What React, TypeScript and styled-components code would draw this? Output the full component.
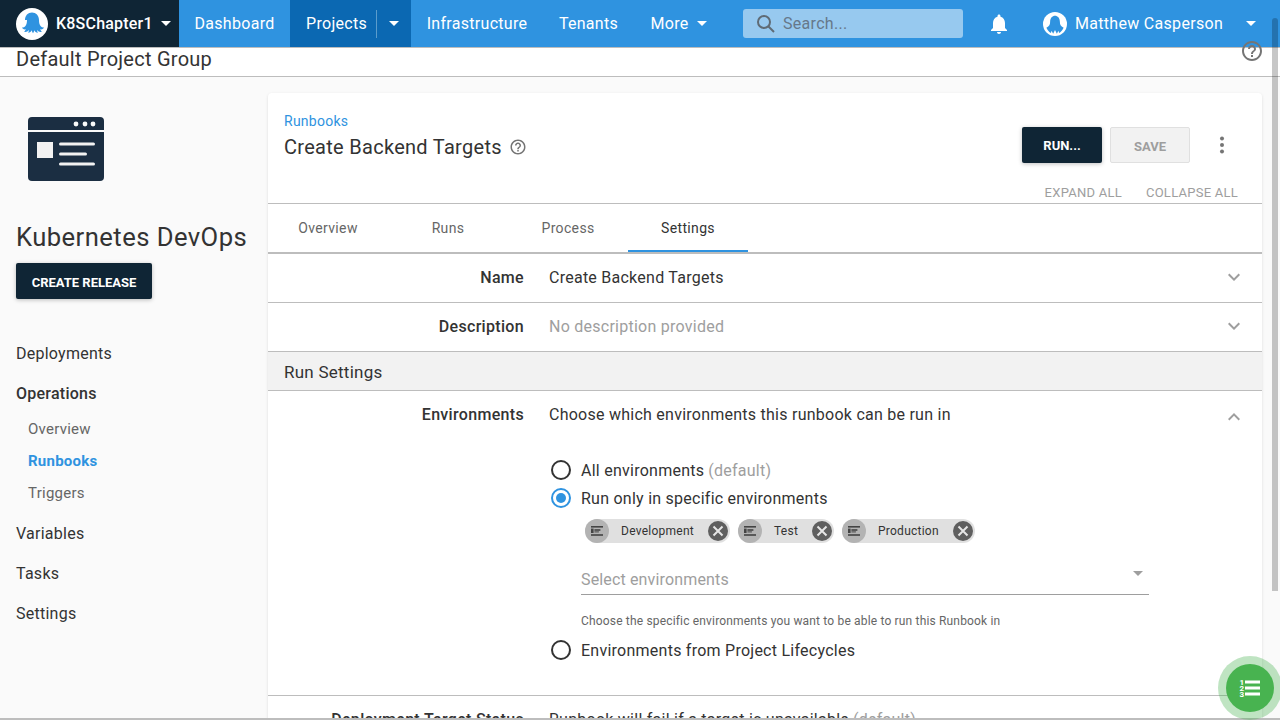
import React from "react";
import styled, { createGlobalStyle } from "styled-components";

const Global = createGlobalStyle`
  html, body { margin: 0; padding: 0; height: 100%; overflow: hidden; background: #fff; }
  body { font-family: Roboto, "Liberation Sans", sans-serif; color: #333; letter-spacing: 0.25px; }
  * { box-sizing: border-box; }
`;

const Page = styled.div`
  position: relative; width: 1280px; height: 720px; overflow: hidden;
  display: flex; flex-direction: column; background: #fafafa;
`;
const Nav = styled.nav`
  flex: none; height: 48px; display: flex; align-items: stretch;
  background: #2f93e0; border-bottom: 1px solid #bdbdbd; color: #fff; font-size: 16px; letter-spacing: 0.3px;
`;
const Org = styled.div`
  width: 179px; background: #0f2535; display: flex; align-items: center;
  padding-left: 16px; font-weight: 500; gap: 8px;
`;
const OrgName = styled.span`font-size: 16px; letter-spacing: 0.2px;`;
const NavItem = styled.div<{ $w: number }>`
  width: ${p => p.$w}px; display: flex; align-items: center; justify-content: center; gap: 8px;
`;
const ProjectsItem = styled.div`
  width: 121px; display: flex; align-items: center; padding-left: 16px; gap: 12px; background: #0b68b2;
`;
const ProjectsLabel = styled.span`
  padding-right: 9px; height: 28px; line-height: 28px; border-right: 1px solid #5b9ccc;
`;
const Caret = styled.i<{ $c?: string }>`
  display: inline-block; width: 0; height: 0; border-left: 5px solid transparent; border-right: 5px solid transparent;
  border-top: 5px solid ${p => p.$c || "#fff"};
`;
const Search = styled.div`
  width: 220px; height: 29px; margin: 9px 0 0 20px; border-radius: 3px; background: #97c9ef;
  display: flex; align-items: center; padding-left: 13px; gap: 7px; color: #66788a;
`;
const NavBell = styled.div`
  margin-left: 24px; width: 24px; display: flex; align-items: center; justify-content: center;
`;
const UserBox = styled.div`
  margin-left: 32px; display: flex; align-items: center; gap: 8px; width: 180px;
`;
const UserCaret = styled.div`margin-left: 23px; display: flex; align-items: center;`;

const SubHeader = styled.header`
  flex: none; height: 29px; background: #fff; border-bottom: 1px solid #bdbdbd;
  display: flex; justify-content: space-between; padding: 0 16px 0 16px;
  font-size: 20px; line-height: 23px; color: #333;
`;
const HelpTop = styled.div`margin-top: -9px; height: 24px;`;

const Body = styled.div`flex: 1; display: flex; min-height: 0;`;
const Side = styled.aside`flex: none; width: 268px; padding: 40px 0 0 16px;`;
const ProjectLogo = styled.div`padding-left: 12px; height: 64px;`;
const ProjectName = styled.h1`
  margin: 39px 0 0; font-weight: 400; font-size: 25.6px; line-height: 34px; color: #333; white-space: nowrap; letter-spacing: 0.45px;
`;
const CreateBtn = styled.div`
  margin-top: 9px; width: 136px; height: 36px; padding-top: 2px; background: #0f2535; color: #fff; border-radius: 2px;
  font-size: 13px; font-weight: 700; letter-spacing: 0; display: flex; align-items: center; justify-content: center;
  box-shadow: 0 1px 4px rgba(0,0,0,.25);
`;
const SideMenu = styled.div`margin-top: 35px; display: flex; flex-direction: column;`;
const SideItem = styled.div<{ $strong?: boolean }>`
  height: 40px; line-height: 40px; font-size: 16px; color: #333; font-weight: ${p => (p.$strong ? 500 : 400)};
`;
const SideSub = styled.div<{ $active?: boolean }>`
  height: 32px; line-height: 32px; font-size: 15px; padding-left: 12px;
  color: ${p => (p.$active ? "#2f93e0" : "#666")}; font-weight: ${p => (p.$active ? 700 : 400)};
`;
const SubGroup = styled.div`margin: -1px 0 0; display: flex; flex-direction: column; padding-bottom: 5px;`;

const Card = styled.main`
  width: 994px; margin-top: 16px; background: #fff; border-radius: 4px 4px 0 0;
  box-shadow: 0 1px 3px rgba(0,0,0,.12); flex: none; overflow: hidden;
`;
const CardHead = styled.div`
  height: 111px; position: relative; padding: 20px 24px 0 16px; display: flex; justify-content: space-between;
  border-bottom: 1px solid #bdbdbd;
`;
const Breadcrumb = styled.div`font-size: 14px; line-height: 16px; color: #2f93e0;`;
const TitleRow = styled.div`display: flex; align-items: center; gap: 7px; margin-top: 4px;`;
const Title = styled.h2`margin: 0; font-weight: 400; font-size: 20px; line-height: 28px; color: #333; letter-spacing: 0.29px;`;
const HeadRight = styled.div`display: flex; flex-direction: column; align-items: flex-end;`;
const Actions = styled.div`display: flex; align-items: center; margin-top: 14px; margin-right: 4px;`;
const Run = styled.div`
  width: 80px; height: 36px; background: #0f2535; color: #fff; border-radius: 2px; font-size: 13px; font-weight: 700; letter-spacing: 0;
  display: flex; align-items: center; justify-content: center; box-shadow: 0 1px 4px rgba(0,0,0,.25);
`;
const Save = styled.div`
  width: 80px; height: 36px; margin-left: 8px; background: #f2f2f2; border: 1px solid #e0e0e0; border-radius: 2px; color: #9e9e9e;
  font-size: 13px; font-weight: 700; letter-spacing: 0; display: flex; align-items: center; justify-content: center; padding-top: 3px;
`;
const Kebab = styled.div`margin-left: 20px; width: 24px; display: flex; justify-content: center;`;
const ExpandRow = styled.div`
  margin-top: 22px; display: flex; gap: 24px; font-size: 13px; line-height: 16px; color: #9e9e9e;
`;
const Tabs = styled.div`display: flex; height: 50px; border-bottom: 2px solid #bdbdbd;`;
const Tab = styled.div<{ $active?: boolean }>`
  width: 120px; height: 48px; display: flex; align-items: center; justify-content: center; font-size: 14px; letter-spacing: 0.35px;
  color: ${p => (p.$active ? "#333" : "#666")}; border-bottom: 2px solid ${p => (p.$active ? "#2f93e0" : "transparent")};
  padding-top: 1px;
`;
const Row = styled.div<{ $h: number; $open?: boolean }>`
  height: ${p => p.$h}px; border-bottom: ${p => (p.$open ? "none" : "1px solid #bdbdbd")};
  display: flex; align-items: ${p => (p.$open ? "flex-start" : "center")};
  padding: ${p => (p.$open ? "14px 0 0" : "0 0 2px")};
  font-size: 16px; flex: none;
`;
const Label = styled.div`width: 256px; text-align: right; font-weight: 500; color: #333; flex: none; line-height: 19px; letter-spacing: 0.32px;`;
const Value = styled.div<{ $muted?: boolean }>`
  margin-left: 25px; flex: 1; line-height: 19px; color: ${p => (p.$muted ? "#9e9e9e" : "#333")};
`;
const Chev = styled.div`width: 24px; margin-right: 16px; display: flex; justify-content: center;`;
const SectionHead = styled.div`
  height: 39px; background: #f2f2f2; border-bottom: 1px solid #bdbdbd; padding-left: 16px;
  font-size: 17px; line-height: 40px; color: #333;
`;
const EnvBody = styled.div`padding: 10px 0 0 281px; height: 250px; border-bottom: 1px solid #bdbdbd; margin-top: -1px;`;
const Radio = styled.div`display: flex; align-items: center; height: 28px; font-size: 16px; color: #333; gap: 10px;`;
const RadioDot = styled.span<{ $on?: boolean }>`
  width: 20px; height: 20px; margin-left: 2px; border-radius: 50%; flex: none; position: relative;
  border: 2px solid ${p => (p.$on ? "#2f93e0" : "#333")};
  ${p => p.$on ? `&::after{content:"";position:absolute;left:3px;top:3px;width:10px;height:10px;border-radius:50%;background:#2f93e0;}` : ""}
`;
const Default = styled.span`color: #9e9e9e; margin-left: 4px;`;
const Chips = styled.div`display: flex; padding-left: 36px; margin-top: 7px; height: 24px; gap: 8px;`;
const Chip = styled.div<{ $w: number }>`
  width: ${p => p.$w}px; height: 24px; border-radius: 12px; background: #e0e0e0;
  display: flex; align-items: center; font-size: 12px; color: #333; position: relative;
`;
const ChipIcon = styled.span`
  width: 24px; height: 24px; border-radius: 50%; background: #b3b3b3; display: flex; align-items: center; justify-content: center; flex: none;
`;
const ChipText = styled.span`margin-left: 12px;`;
const ChipClose = styled.span`
  position: absolute; right: 2px; top: 2px; width: 20px; height: 20px; border-radius: 50%; background: #5f5f5f;
  display: flex; align-items: center; justify-content: center;
`;
const SelectWrap = styled.div`
  margin: 18px 0 0 32px; width: 568px; height: 34px; border-bottom: 1px solid #9e9e9e; display: flex;
  justify-content: space-between; align-items: center; padding-right: 6px; font-size: 16px; color: #9e9e9e; letter-spacing: 0.15px;
`;
const SelectText = styled.span`padding-top: 4px;`;
const SelectCaret = styled(Caret)`margin-bottom: 8px;`;
const Hint = styled.div`margin: 18px 0 0 32px; font-size: 12px; line-height: 16px; color: #666; letter-spacing: 0.17px;`;
const LastRadio = styled(Radio)`margin-top: 7px;`;
const Cut = styled(Row)`border: none; height: 46px; align-items: flex-start; padding: 14px 0 0;`;

const ScrollThumb = styled.div`
  position: absolute; left: 1272px; top: 18px; width: 6px; height: 573px; border-radius: 3px 3px 0 0; background: rgba(0,0,0,.22);
`;
const BottomLine = styled.div`position: absolute; left: 0; right: 0; bottom: 0; height: 2px; background: #bdbdbd;`;
const Fab = styled.div`
  position: absolute; left: 1218px; top: 656px; width: 64px; height: 64px; border-radius: 50%; background: rgba(72,179,80,.35);
  display: flex; align-items: center; justify-content: center;
`;
const FabInner = styled.div`
  width: 48px; height: 48px; border-radius: 50%; background: #48b350; display: flex; align-items: center; justify-content: center;
`;
const FabDigit = styled.text`font: 700 8px Roboto, "Liberation Sans", sans-serif; fill: #fff; letter-spacing: 0;`;

const OrgLogo = () => (
  <svg width={32} height={32} viewBox="0 0 32 32">
    <circle cx="16" cy="16" r="16" fill="#fff" />
    <path fill="#2f93e0" d="M9 12c0-4.500 3-7.500 7-7.500s7 3 7 7.500c0 3 .5 5 2 6.500 1 1 2 1.200 3 .8-.5 1.700-2 2.500-3.800 2 .3 1 .8 1.700 1.600 2.400-1.800.6-3.600-.2-4.600-1.800-.1 1.200.2 2 .7 2.800-1.600.1-3-.8-3.600-2.400-.3 1.200-.8 2.200-1.300 3-.5-.8-1-1.800-1.300-3-.6 1.600-2 2.500-3.600 2.400.5-.8.8-1.600.7-2.800-1 1.600-2.800 2.400-4.600 1.800.8-.7 1.300-1.400 1.600-2.400-1.800.5-3.300-.3-3.800-2 1 .4 2 .2 3-.8 1.500-1.500 2-3.500 2-6.500z" />
  </svg>
);

const UserLogo = () => (
  <svg width={24} height={24} viewBox="0 0 32 32">
    <circle cx="16" cy="16" r="16" fill="#fff" />
    <path fill="#2f93e0" d="M9.500 13c0-5 3-8 6.500-8s6.500 3 6.500 8c0 4 1 6 5 8-1.500 3.500-4 6-6 7l-1-3-2 4-2.500-5-2.500 5-2-4-1 3c-2-1-4.500-3.500-6-7 4-2 5-4 5-8z" />
  </svg>
);

const HelpIcon = ({ size }: { size: number }) => (
  <svg width={size} height={size} viewBox="0 0 24 24" fill="#757575">
    <path d="M11 18h2v-2h-2v2zm1-16C6.480 2 2 6.480 2 12s4.480 10 10 10 10-4.480 10-10S17.520 2 12 2zm0 18c-4.410 0-8-3.590-8-8s3.590-8 8-8 8 3.590 8 8-3.590 8-8 8zm0-14c-2.210 0-4 1.790-4 4h2c0-1.100.9-2 2-2s2 .9 2 2c0 2-3 1.750-3 5h2c0-2.250 3-2.500 3-5 0-2.210-1.790-4-4-4z" />
  </svg>
);

const ChevronSvg = ({ up }: { up?: boolean }) => (
  <svg width="24" height="24" viewBox="0 0 24 24" fill="#9e9e9e">
    <path d={up ? "M12 8l-6 6 1.410 1.410L12 10.830l4.590 4.580L18 14z" : "M16.590 8.590L12 13.170 7.410 8.590 6 10l6 6 6-6z"} />
  </svg>
);

const EnvIcon = () => (
  <svg width="12" height="10" viewBox="0 0 12 10" fill="#444">
    <rect x="0" y="0" width="12" height="1.600" />
    <rect x="0" y="2.600" width="2.600" height="4.400" />
    <rect x="3.400" y="3.200" width="6" height="1.600" />
    <rect x="3.400" y="5.400" width="4.500" height="1" />
    <rect x="0" y="8.200" width="12" height="1.600" />
  </svg>
);

const CloseX = () => (
  <svg width="12" height="12" viewBox="0 0 12 12" stroke="#e6e6e6" strokeWidth="2"><path d="M1.500 1.500l9 9M10.500 1.500l-9 9" /></svg>
);

const ProjectIcon = () => (
  <svg width="76" height="64" viewBox="0 0 76 64">
    <path fill="#1b2e42" d="M4 0h68a4 4 0 0 1 4 4v9H0V4a4 4 0 0 1 4-4z" />
    <path fill="#1b2e42" d="M0 15h76v45a4 4 0 0 1-4 4H4a4 4 0 0 1-4-4z" />
    <circle cx="48" cy="7" r="2.400" fill="#fafafa" /><circle cx="57" cy="7" r="2.400" fill="#fafafa" /><circle cx="65" cy="7" r="2.400" fill="#fafafa" />
    <rect x="9" y="25" width="16" height="16" fill="#f2f2f2" />
    <rect x="31" y="25.500" width="36" height="3" rx="1.500" fill="#f2f2f2" />
    <rect x="31" y="35.500" width="28" height="3" rx="1.500" fill="#f2f2f2" />
    <rect x="31" y="45.500" width="36" height="3" rx="1.500" fill="#f2f2f2" />
  </svg>
);

const chips = [
  { t: "Development", w: 145 },
  { t: "Test", w: 96 },
  { t: "Production", w: 133 },
];

export default function App() {
  return (
    <Page>
      <Global />
      <Nav>
        <Org>
          <OrgLogo />
          <OrgName>K8SChapter1</OrgName>
          <Caret />
        </Org>
        <NavItem $w={111}>Dashboard</NavItem>
        <ProjectsItem>
          <ProjectsLabel>Projects</ProjectsLabel>
          <Caret />
        </ProjectsItem>
        <NavItem $w={132}>Infrastructure</NavItem>
        <NavItem $w={91}>Tenants</NavItem>
        <NavItem $w={89}>More <Caret /></NavItem>
        <Search>
          <svg width="20" height="20" viewBox="0 0 20 20" fill="none" stroke="#5f6b75" strokeWidth="2"><circle cx="8" cy="8" r="6" /><path d="M12.500 12.500L18 18" /></svg>
          Search...
        </Search>
        <NavBell>
          <svg width="24" height="24" viewBox="0 0 24 24" fill="#fff"><path d="M12 22c1.100 0 2-.9 2-2h-4c0 1.100.9 2 2 2zm6-6v-5c0-3.070-1.630-5.640-4.500-6.320V4c0-.83-.67-1.500-1.500-1.500s-1.500.67-1.500 1.500v.68C7.640 5.360 6 7.920 6 11v5l-2 2v1h16v-1l-2-2z" /></svg>
        </NavBell>
        <UserBox>
          <UserLogo />
          Matthew Casperson
        </UserBox>
        <UserCaret><Caret /></UserCaret>
      </Nav>
      <SubHeader>
        Default Project Group
        <HelpTop><HelpIcon size={24} /></HelpTop>
      </SubHeader>
      <Body>
        <Side>
          <ProjectLogo><ProjectIcon /></ProjectLogo>
          <ProjectName>Kubernetes DevOps</ProjectName>
          <CreateBtn>CREATE RELEASE</CreateBtn>
          <SideMenu>
            <SideItem>Deployments</SideItem>
            <SideItem $strong>Operations</SideItem>
            <SubGroup>
              <SideSub>Overview</SideSub>
              <SideSub $active>Runbooks</SideSub>
              <SideSub>Triggers</SideSub>
            </SubGroup>
            <SideItem>Variables</SideItem>
            <SideItem>Tasks</SideItem>
            <SideItem>Settings</SideItem>
          </SideMenu>
        </Side>
        <Card>
          <CardHead>
            <div>
              <Breadcrumb>Runbooks</Breadcrumb>
              <TitleRow><Title>Create Backend Targets</Title><HelpIcon size={18} /></TitleRow>
            </div>
            <HeadRight>
              <Actions>
                <Run>RUN...</Run>
                <Save>SAVE</Save>
                <Kebab>
                  <svg width="24" height="24" viewBox="0 0 24 24" fill="#757575"><circle cx="12" cy="5.500" r="2" /><circle cx="12" cy="12" r="2" /><circle cx="12" cy="18.500" r="2" /></svg>
                </Kebab>
              </Actions>
              <ExpandRow><span>EXPAND ALL</span><span>COLLAPSE ALL</span></ExpandRow>
            </HeadRight>
          </CardHead>
          <Tabs>
            <Tab>Overview</Tab>
            <Tab>Runs</Tab>
            <Tab>Process</Tab>
            <Tab $active>Settings</Tab>
          </Tabs>
          <Row $h={49}><Label>Name</Label><Value>Create Backend Targets</Value><Chev><ChevronSvg /></Chev></Row>
          <Row $h={49}><Label>Description</Label><Value $muted>No description provided</Value><Chev><ChevronSvg /></Chev></Row>
          <SectionHead>Run Settings</SectionHead>
          <Row $h={56} $open><Label>Environments</Label><Value>Choose which environments this runbook can be run in</Value><Chev><ChevronSvg up /></Chev></Row>
          <EnvBody>
            <Radio><RadioDot /><span>All environments<Default>(default)</Default></span></Radio>
            <Radio><RadioDot $on /><span>Run only in specific environments</span></Radio>
            <Chips>
              {chips.map(c => (
                <Chip key={c.t} $w={c.w}>
                  <ChipIcon><EnvIcon /></ChipIcon>
                  <ChipText>{c.t}</ChipText>
                  <ChipClose><CloseX /></ChipClose>
                </Chip>
              ))}
            </Chips>
            <SelectWrap><SelectText>Select environments</SelectText><SelectCaret $c="#9e9e9e" /></SelectWrap>
            <Hint>Choose the specific environments you want to be able to run this Runbook in</Hint>
            <LastRadio><RadioDot /><span>Environments from Project Lifecycles</span></LastRadio>
          </EnvBody>
          <Cut $h={46}><Label>Deployment Target Status</Label><Value>Runbook will fail if a target is unavailable<Default>(default)</Default></Value><Chev><ChevronSvg /></Chev></Cut>
        </Card>
      </Body>
      <BottomLine />
      <ScrollThumb />
      <Fab>
        <FabInner>
          <svg width="22" height="20" viewBox="0 0 22 20" fill="#fff">
            <rect x="6" y="2.500" width="15" height="3" /><rect x="6" y="8.500" width="15" height="3" /><rect x="6" y="14.500" width="15" height="3" />
            <FabDigit x="0.500" y="6.500">1</FabDigit>
            <FabDigit x="0.500" y="12.500">2</FabDigit>
            <FabDigit x="0.500" y="18.500">3</FabDigit>
          </svg>
        </FabInner>
      </Fab>
    </Page>
  );
}
